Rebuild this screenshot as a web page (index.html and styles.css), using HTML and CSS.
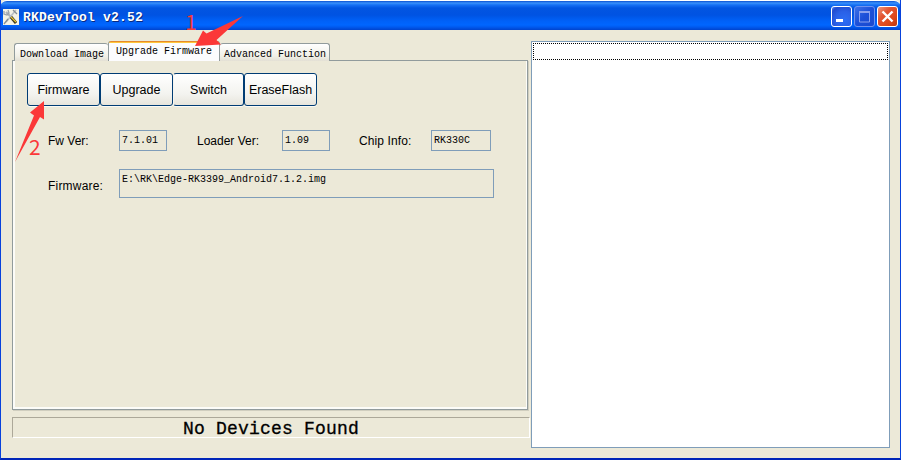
FILE: index.html
```html
<!DOCTYPE html>
<html lang="en">
<head>
<meta charset="utf-8">
<title>RKDevTool v2.52</title>
<link rel="stylesheet" href="styles.css">
</head>
<body>
<div class="window">
  <header class="titlebar">
    <svg class="app-icon" width="16" height="16" viewBox="0 0 16 16">
      <rect width="16" height="16" fill="#f4f2e6"/>
      <path d="M3 3l7 7 3 4" stroke="#aeb3ba" stroke-width="2.2" fill="none"/>
      <path d="M1 2v3l3 1 2-2-1-3" stroke="#9aa0a8" stroke-width="1.3" fill="none"/>
      <path d="M13 1L3 13" stroke="#b9bfc4" stroke-width="1.7"/>
      <path d="M10 1l4 4M1 15l4-5" stroke="#858d93" stroke-width="1.3"/>
      <path d="M8 8l5 6" stroke="#3b3820" stroke-width="3"/>
      <path d="M8 8l5 5" stroke="#e6c435" stroke-width="1.3"/>
    </svg>
    <h1 class="title">RKDevTool v2.52</h1>
    <div class="controls">
      <span class="ctl"><svg width="21" height="21"><rect x="5" y="13" width="7" height="3" fill="#fff"/></svg></span>
      <span class="ctl ctl-off"><svg width="21" height="21"><path d="M5 5.5h11M5 6.5h11M5.5 5v11h10V5" fill="none" stroke="#8aa0ed"/></svg></span>
      <span class="ctl ctl-close"><svg width="21" height="21"><path d="M5.5 5.5l10 10M15.5 5.5l-10 10" stroke="#fff" stroke-width="2.4"/></svg></span>
    </div>
  </header>
  <main class="content">
    <section class="left">
      <nav class="tabs">
        <div class="tab tab-first">Download Image</div>
        <div class="tab tab-active">Upgrade Firmware</div>
        <div class="tab tab-last">Advanced Function</div>
      </nav>
      <div class="panel">
        <div class="buttons">
          <button>Firmware</button><button>Upgrade</button><button class="narrow">Switch</button><button>EraseFlash</button>
        </div>
        <div class="fields">
          <span class="label">Fw Ver:</span><span class="field">7.1.01</span>
          <span class="label loader">Loader Ver:</span><span class="field">1.09</span>
          <span class="label chip">Chip Info:</span><span class="field field-chip">RK330C</span>
        </div>
        <div class="path-row">
          <span class="label">Firmware:</span><span class="field field-path">E:\RK\Edge-RK3399_Android7.1.2.img</span>
        </div>
      </div>
      <div class="status">No Devices Found</div>
    </section>
    <section class="log"><div class="log-row"></div></section>
  </main>
  <svg class="arrows" width="260" height="170">
    <path d="M195 46L203 30.5L206.5 33.5L243 16L216.5 40L221 44.5Z"/>
    <path d="M44 101L30 112.5L34 115.5L15 162L40 117L44 119.5Z"/>
    <text x="185" y="30">1</text>
    <text x="29" y="155">2</text>
  </svg>
</div>
</body>
</html>
```
FILE: styles.css
```css
* { box-sizing: border-box; }
body { margin: 0; background: #fff; font: 12px "Liberation Sans", sans-serif; color: #000; }
.window {
  position: relative; width: 901px; height: 460px; overflow: hidden;
  background: #ece9d8; border: solid #0842dc; border-width: 0 1px 2px;
  border-bottom-color: #0025b8; display: flex; flex-direction: column;
}
.titlebar {
  height: 30px; margin: 0 -1px; padding: 2px 3px 0; display: flex; align-items: center;
  border-top: 1px solid #fff; border-radius: 7px 7px 0 0;
  background: linear-gradient(#0a4fd0 0, #3a91fb 2px, #1670f4 4px, #0355e1 7px, #0053e2 14px, #0061f8 20px, #0066ff 24px, #005af0 26px, #0043cd 29px);
}
.app-icon { flex: none; }
.title {
  margin: 1px 0 0 4px; color: #fff; font: bold 13px "Liberation Mono", monospace;
  letter-spacing: .2px; text-shadow: 1px 1px #0a2a80; white-space: pre;
}
.controls { margin-left: auto; display: flex; gap: 2px; }
.ctl {
  width: 21px; height: 21px; border: 1px solid #fff; border-radius: 3px;
  background: radial-gradient(circle at 65% 70%, #2c6df5, #2a60e6 50%, #204bd0 80%, #5a88ee);
}
.ctl svg { display: block; margin: -1px; }
.ctl-off { border-color: #7092ee; background: linear-gradient(135deg, #3d70e8, #1c4fd8 50%, #1a49ce); }
.ctl-close { background: linear-gradient(135deg, #ef987e, #e25634 35%, #dd4818 70%, #b93710); }
.content { flex: 1; display: flex; padding: 11px 10px 10px 11px; gap: 1px; }
.left { width: 518px; display: flex; flex-direction: column; }
.tabs {
  display: flex; align-items: flex-end; height: 20px; padding-left: 2px; position: relative;
  font: 10px "Liberation Mono", monospace; white-space: pre;
}
.tab {
  height: 18px; line-height: 21px; border: 1px solid #919b9c; border-bottom: 0;
  border-radius: 3px 3px 0 0; background: linear-gradient(#fff, #f1f0e7 70%, #e3e0d5); padding-left: 5px;
}
.tab-first { width: 94px; border-right: 0; }
.tab-active {
  width: 112px; height: 20px; line-height: 21px; padding-left: 7px; border-top: 0;
  background: linear-gradient(#e68b2c 0 1px, #ffc73c 1px 2px, #fcfcfe 2px); position: relative; z-index: 1;
}
.tab-last { width: 110px; border-left: 0; padding-left: 4px; }
.panel {
  width: 516px; height: 350px; margin-top: -1px; padding: 10px 11px; border: 1px solid #919b9c;
  box-shadow: inset 2px -2px #fcfcf8, inset -1px 0 #fcfcf8, 1px 1px #d0cebf;
}
.buttons { display: flex; padding-left: 3px; margin-top: 2px; }
button {
  width: 73px; height: 33px; padding: 0; border: 1px solid #003c74; border-radius: 3px;
  background: linear-gradient(#fff, #f3f3ef 65%, #e7e5dc);
  font: 12.5px "Liberation Sans", sans-serif; color: #000;
  box-shadow: 0 1px #fbfaf4;
}
.narrow { width: 71px; border-left-color: #f6f5f0; }
.fields, .path-row { display: flex; padding-left: 24px; }
.fields { margin-top: 24px; height: 22px; }
.path-row { margin-top: 17px; }
.label { width: 71px; padding-top: 4px; font-size: 12px; white-space: nowrap; }
.path-row .label { padding-top: 10px; letter-spacing: .2px; }
.loader { width: 85px; margin-left: 30px; }
.chip { width: 72px; margin-left: 29px; letter-spacing: .1px; }
.field {
  width: 48px; height: 21px; border: 1px solid #7f9db9; padding: 3px 2px;
  font: 10px/13px "Liberation Mono", monospace; white-space: pre;
}
.field-chip { width: 60px; }
.field-path { width: 375px; height: 29px; }
.status {
  width: 518px; height: 21px; margin-top: 7px; border: 1px solid #aca899;
  border-right-color: #fff; border-bottom-color: #fff; text-align: center;
  font: 18px/22px "Liberation Mono", monospace; letter-spacing: .2px;
  -webkit-text-stroke: .3px #000;
}
.log { width: 359px; height: 407px; border: 1px solid #7f9db9; background: #fff; padding: 1px; }
.log-row { width: 355px; height: 17px; border: 1px dotted #000; }
.arrows { position: absolute; z-index: 2; left: -1px; top: 0; fill: #fb3838; }
.arrows text { font: 21px "Noto Sans CJK SC", sans-serif; }
```
